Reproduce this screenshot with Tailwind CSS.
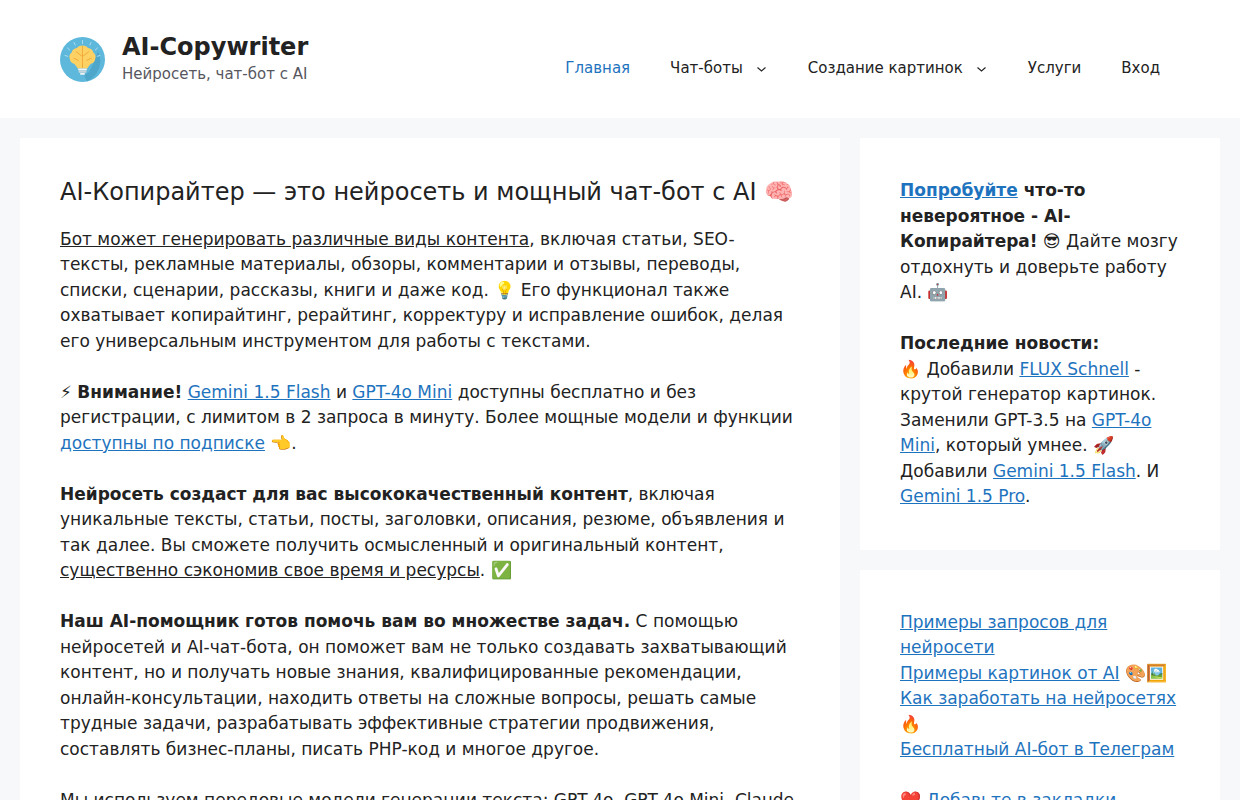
<!DOCTYPE html>
<html lang="ru">
<head>
    <meta charset="UTF-8">
    <meta name="viewport" content="width=device-width, initial-scale=1.0">
    <title>AI-Copywriter</title>
    <script src="https://cdn.jsdelivr.net/npm/@tailwindcss/browser@4"></script>
</head>
<body class="bg-[#f7f8f9] text-[#222222] font-['DejaVu_Sans',sans-serif] text-[17px] leading-[25.5px]">
    <!-- Header -->
    <header class="bg-white h-[118px] px-[60px] flex items-center justify-between">
        <div class="flex items-center gap-[17px]">
            <svg class="w-[45px] h-[45px]" viewBox="0 0 45 45">
                <circle cx="22.5" cy="22.5" r="22.5" fill="#5db8dc"/>
                <path d="M29 35 L33 27 L38 14 A22.500 22.500 0 0 1 27 44.500 L24 38 Z" fill="#4fa6cb"/>
                <g stroke="#a9dcef" stroke-width="1" stroke-linecap="round">
                    <path d="M22.500 3.500v3M14 5.500l1.200 2.600M31 5.500l-1.200 2.600M7.500 11l2.200 2M37.500 11l-2.200 2M5 18.500l2.800.8M40 18.500l-2.800.8"/>
                </g>
                <path d="M22.500 8.500c-3 0-4.500 1.300-5.500 2.500-2.800.2-5 2-5.300 4.500-2 1.300-2.900 4-1.900 6.500.2 2.500 2 4.500 4.700 5 .8 1.200 2.300 2.500 3 4.500h10c.7-2 2.200-3.300 3-4.500 2.700-.5 4.500-2.500 4.700-5 1-2.500.1-5.200-1.900-6.500-.3-2.500-2.500-4.300-5.300-4.500-1-1.200-2.500-2.500-5.500-2.500z" fill="#fdd163"/>
                <path d="M22.500 9v22M16 14.500l6.500 5M29 14.500l-6.500 5M13.500 21l5 2.500M31.500 21l-5 2.500" stroke="#f1ac3a" stroke-width="1" fill="none"/>
                <rect x="18" y="31.500" width="9" height="2" rx="1" fill="#eef3f5"/>
                <rect x="18.500" y="33.800" width="8" height="2" rx="1" fill="#c9d5da"/>
                <rect x="20" y="36" width="5" height="1.800" rx=".9" fill="#eef3f5"/>
            </svg>
            <div class="mb-[2px]">
                <p class="text-[24px] font-bold leading-[30px]">AI-Copywriter</p>
                <p class="text-[15px] leading-[22px] text-[#575760] mt-[1px]">Нейросеть, чат-бот с AI</p>
            </div>
        </div>
        <nav class="flex items-center text-[15px] mt-[20px]">
            <a href="#" class="px-[20px] text-[#1e73be]">Главная</a>
            <a href="#" class="px-[20px] flex items-center">Чат-боты
                <svg class="w-[12px] h-[10px] ml-[13px]" viewBox="0 0 12 10" fill="none" stroke="#222222" stroke-width="1.100"><path d="M1.500 3.500 5.500 7l4-3.500"/></svg>
            </a>
            <a href="#" class="px-[20px] flex items-center">Создание картинок
                <svg class="w-[12px] h-[10px] ml-[13px]" viewBox="0 0 12 10" fill="none" stroke="#222222" stroke-width="1.100"><path d="M1.500 3.500 5.500 7l4-3.500"/></svg>
            </a>
            <a href="#" class="px-[20px]">Услуги</a>
            <a href="#" class="px-[20px]">Вход</a>
        </nav>
    </header>

    <div class="flex gap-[20px] px-[20px] pt-[20px] items-start">
        <!-- Main article -->
        <main class="bg-white w-[820px] shrink-0 p-[40px]">
            <h1 class="text-[24px] leading-[28.8px] mb-[20px]">AI-Копирайтер — это нейросеть и мощный чат-бот с AI 🧠</h1>
            <p class="mb-[25.5px]"><span class="underline">Бот может генерировать различные виды контента</span>, включая статьи, SEO-тексты, рекламные материалы, обзоры, комментарии и отзывы, переводы, списки, сценарии, рассказы, книги и даже код. 💡 Его функционал также охватывает копирайтинг, рерайтинг, корректуру и исправление ошибок, делая его универсальным инструментом для работы с текстами.</p>
            <p class="mb-[25.5px]">⚡ <b>Внимание!</b> <a href="#" class="underline text-[#1e73be]">Gemini 1.5 Flash</a> и <a href="#" class="underline text-[#1e73be]">GPT-4o Mini</a> доступны бесплатно и без регистрации, с лимитом в 2 запроса в минуту. Более мощные модели и функции <a href="#" class="underline text-[#1e73be]">доступны по подписке</a> 👈.</p>
            <p class="mb-[25.5px]"><b>Нейросеть создаст для вас высококачественный контент</b>, включая уникальные тексты, статьи, посты, заголовки, описания, резюме, объявления и так далее. Вы сможете получить осмысленный и оригинальный контент, <span class="underline">существенно сэкономив свое время и ресурсы</span>. ✅</p>
            <p class="mb-[25.5px]"><b>Наш AI-помощник готов помочь вам во множестве задач.</b> С помощью нейросетей и AI-чат-бота, он поможет вам не только создавать захватывающий контент, но и получать новые знания, квалифицированные рекомендации, онлайн-консультации, находить ответы на сложные вопросы, решать самые трудные задачи, разрабатывать эффективные стратегии продвижения, составлять бизнес-планы, писать PHP-код и многое другое.</p>
            <p>Мы используем передовые модели генерации текста: GPT-4o, GPT-4o Mini, Claude</p>
        </main>

        <!-- Sidebar -->
        <aside class="w-[360px] shrink-0 flex flex-col gap-[20px]">
            <div class="bg-white p-[40px]">
                <p class="mb-[25.5px]"><b><a href="#" class="underline text-[#1e73be]">Попробуйте</a> что-то невероятное - AI-Копирайтера!</b> 😎 Дайте мозгу отдохнуть и доверьте работу AI. 🤖</p>
                <p><b>Последние новости:</b><br>🔥 Добавили <a href="#" class="underline text-[#1e73be]">FLUX Schnell</a> - крутой генератор картинок.<br>Заменили GPT-3.5 на <a href="#" class="underline text-[#1e73be]">GPT-4o Mini</a>, который умнее. 🚀<br>Добавили <a href="#" class="underline text-[#1e73be]">Gemini 1.5 Flash</a>. И <a href="#" class="underline text-[#1e73be]">Gemini 1.5 Pro</a>.</p>
            </div>
            <div class="bg-white p-[40px]">
                <p class="mb-[25.5px]"><a href="#" class="underline text-[#1e73be]">Примеры запросов для нейросети</a><br><a href="#" class="underline text-[#1e73be]">Примеры картинок от AI</a> 🎨🖼️<br><a href="#" class="underline text-[#1e73be]">Как заработать на нейросетях</a> 🔥<br><a href="#" class="underline text-[#1e73be]">Бесплатный AI-бот в Телеграм</a></p>
                <p>❤️ <a href="#" class="underline text-[#1e73be]">Добавьте в закладки</a></p>
            </div>
        </aside>
    </div>
</body>
</html>
